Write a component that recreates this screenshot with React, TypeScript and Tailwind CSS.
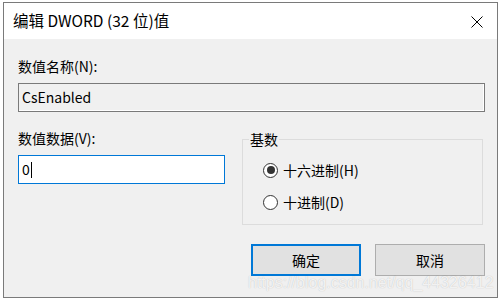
export default function App() {
  return (
    <div
      className="relative h-[301px] w-[501px] overflow-hidden bg-white pl-[3px] pt-[2px]"
      style={{ fontFamily: '"Noto Sans CJK SC", "Noto Sans", sans-serif' }}
    >
      <div className="flex h-[296px] w-[495px] flex-col border border-[#7a7a7a] bg-[#f0f0f0]">
        {/* 标题栏 */}
        <div className="flex h-[36px] shrink-0 items-center justify-between bg-white pl-[9px] pr-[14px]">
          <span className="text-[15.5px] leading-none text-black">编辑 DWORD (32 位)值</span>
          <svg width="12" height="12" viewBox="0 0 12 12" className="mt-[1px]">
            <path d="M0.5 0.5 L11.5 11.5 M11.5 0.5 L0.5 11.5" stroke="#000" strokeWidth="1" />
          </svg>
        </div>

        <div className="flex flex-1 flex-col pl-[14px] pr-[12px] pt-[17px]">
          <label className="text-[14px] leading-[20px] text-black">数值名称(N):</label>
          <div className="mt-[7px] flex h-[29px] items-center border border-[#7a7a7a] bg-[#f0f0f0] pl-[3px] text-[14px] text-black shadow-[inset_-1px_-1px_0_#fff]">
            CsEnabled
          </div>

          <div className="mt-[16px] flex gap-[17px]">
            <div className="flex w-[207px] flex-col">
              <label className="text-[14px] leading-[20px] text-black">数值数据(V):</label>
              <div className="mt-[7px] flex h-[29px] items-center border border-[#0078d7] bg-white pl-[3px] text-[14px] text-black">
                <span>0</span>
                <span className="ml-[1px] h-[16px] w-px bg-black" />
              </div>
            </div>

            <fieldset className="mt-[1px] h-[96px] w-[241px] border border-[#dcdcdc] pl-[20px]">
              <legend className="-ml-[14px] px-[1px] text-[14px] leading-[20px] text-black">基数</legend>
              <div className="mt-[12px] flex flex-col gap-[14px]">
                <div className="flex items-center gap-[5px]">
                  <span className="flex h-[15px] w-[15px] items-center justify-center rounded-full border border-[#333] bg-white">
                    <span className="h-[8px] w-[8px] rounded-full bg-[#333]" />
                  </span>
                  <span className="text-[14px] leading-[18px] text-black">十六进制(H)</span>
                </div>
                <div className="flex items-center gap-[5px]">
                  <span className="h-[15px] w-[15px] rounded-full border border-[#333] bg-white" />
                  <span className="text-[14px] leading-[18px] text-black">十进制(D)</span>
                </div>
              </div>
            </fieldset>
          </div>

          <div className="mt-[19px] flex justify-end gap-[14px]">
            <button className="flex h-[32px] w-[110px] items-center justify-center border-2 border-[#0078d7] bg-[#e1e1e1] text-[14px] text-black">
              确定
            </button>
            <button className="flex h-[32px] w-[110px] items-center justify-center border border-[#adadad] bg-[#e1e1e1] text-[14px] text-black">
              取消
            </button>
          </div>
        </div>
      </div>

      {/* 水印 */}
      <div
        className="absolute left-[248px] top-[273px] whitespace-nowrap text-[16px] leading-[20px] text-white/80"
        style={{ fontFamily: '"Liberation Sans", Arial, sans-serif', textShadow: '0 0 1px rgba(0,0,0,0.25)' }}
      >
        https://blog.csdn.net/qq_44326412
      </div>
    </div>
  );
}
